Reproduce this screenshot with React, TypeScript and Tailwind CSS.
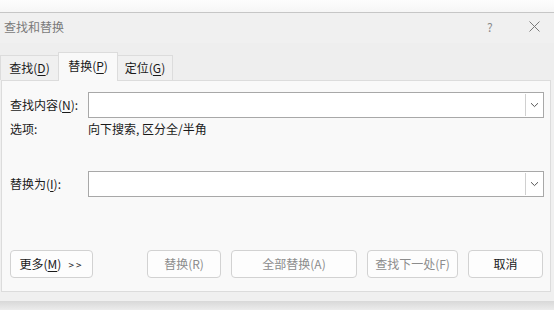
function Chevron() {
  return (
    <svg width="9" height="6" viewBox="0 0 9 6" fill="none">
      <path d="M1 1.2 L4.5 4.6 L8 1.2" stroke="#555" strokeWidth="1" />
    </svg>
  );
}

function ComboBox() {
  return (
    <div className="flex h-[26px] flex-1 border border-[#a8a8a8] bg-white">
      <div className="flex-1" />
      <div className="my-px mr-px flex w-[17px] items-center justify-center border-l border-[#d0d0d0] bg-white">
        <Chevron />
      </div>
    </div>
  );
}

function Btn({ children, disabled, w }: { children: React.ReactNode; disabled?: boolean; w: string }) {
  return (
    <button
      className={`flex h-[28px] ${w} items-center justify-center rounded-[4px] border border-[#d2d2d2] bg-[#fdfdfd] text-[12px] ${
        disabled ? 'text-[#8c8c8c]' : 'text-[#1a1a1a]'
      }`}
    >
      {children}
    </button>
  );
}

export default function App() {
  return (
    <div
      className="flex h-[310px] w-[554px] flex-col overflow-hidden bg-[#e6e6e6] text-[12px] text-[#1a1a1a]"
      style={{ fontFamily: '"Noto Sans CJK SC", "Noto Sans", sans-serif' }}
    >
      {/* top strip */}
      <div className="h-[12px] bg-gradient-to-b from-[#fdfdfd] to-[#f6f6f6]" />

      {/* window */}
      <div className="flex h-[289px] flex-col border-t border-[#c6c6c6] bg-[#f0f0f0]">
        {/* title bar */}
        <div className="flex h-[30px] items-center pb-[3px]">
          <span className="pl-[4px] text-[12px] text-[#7a7a7a]">查找和替换</span>
          <div className="flex-1" />
          <span className="w-[10px] text-[12px] text-[#8a8a8a]">?</span>
          <div className="ml-[32px] mr-[14px] flex items-center">
            <svg width="11" height="11" viewBox="0 0 11 11">
              <path d="M0.5 0.5 L10.5 10.5 M10.5 0.5 L0.5 10.5" stroke="#7a7a7a" strokeWidth="1" />
            </svg>
          </div>
        </div>

        {/* tabs */}
        <div className="flex h-[37px] items-end bg-[#eeeeee]">
          <div className="flex h-[25px] w-[58px] items-center justify-center border border-b-0 border-r-0 border-[#dcdcdc] bg-[#f0f0f0] pb-px">
            查找(<span className="underline underline-offset-2">D</span>)
          </div>
          <div className="relative -mb-px z-10 flex h-[29px] w-[60px] items-center justify-center border border-b-0 border-[#dcdcdc] bg-[#f9f9f9] pb-[3px]">
            替换(<span className="underline underline-offset-2">P</span>)
          </div>
          <div className="flex h-[25px] w-[55px] items-center justify-center border border-b-0 border-l-0 border-[#dcdcdc] bg-[#f0f0f0] pb-px">
            定位(<span className="underline underline-offset-2">G</span>)
          </div>
        </div>

        {/* panel */}
        <div className="ml-px mr-[3px] flex h-[212px] flex-col border border-[#dcdcdc] bg-[#f9f9f9] pl-[8px] pr-[6px] pt-[11px]">
          <div className="flex items-center">
            <span className="w-[78px]">
              查找内容(<span className="underline underline-offset-2">N</span>):
            </span>
            <ComboBox />
          </div>
          <div className="mt-[3px] flex h-[16px] items-center">
            <span className="w-[78px]">选项:</span>
            <span>向下搜索, 区分全/半角</span>
          </div>
          <div className="mt-[34px] flex items-center">
            <span className="w-[78px]">
              替换为(<span className="underline underline-offset-2">I</span>):
            </span>
            <ComboBox />
          </div>
          <div className="mt-[53px] flex items-center">
            <Btn w="w-[83px]">
              <span>
                更多(<span className="underline underline-offset-2">M</span>)
              </span>
              <span className="ml-[7px] text-[10px] tracking-[2px]">&gt;&gt;</span>
            </Btn>
            <div className="ml-[54px]">
              <Btn w="w-[74px]" disabled>替换(R)</Btn>
            </div>
            <div className="ml-[10px]">
              <Btn w="w-[126px]" disabled>全部替换(A)</Btn>
            </div>
            <div className="ml-[10px]">
              <Btn w="w-[91px]" disabled>查找下一处(F)</Btn>
            </div>
            <div className="ml-[10px]">
              <Btn w="w-[75px]">取消</Btn>
            </div>
          </div>
        </div>
      </div>

      {/* shadow */}
      <div className="flex-1 bg-gradient-to-b from-[#d8d8d8] to-[#ececec]" />
    </div>
  );
}
